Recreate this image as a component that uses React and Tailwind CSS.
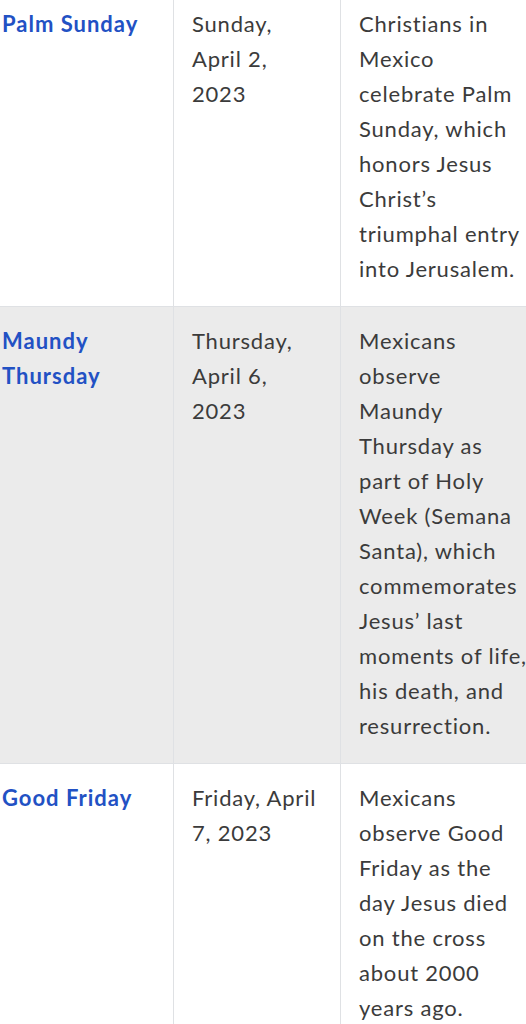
import React from 'react';

const holidays = [
  {
    name: ['Palm Sunday'],
    date: ['Sunday,', 'April 2,', '2023'],
    desc: [
      'Christians in',
      'Mexico',
      'celebrate Palm',
      'Sunday, which',
      'honors Jesus',
      'Christ’s',
      'triumphal entry',
      'into Jerusalem.',
    ],
  },
  {
    name: ['Maundy', 'Thursday'],
    date: ['Thursday,', 'April 6,', '2023'],
    desc: [
      'Mexicans',
      'observe',
      'Maundy',
      'Thursday as',
      'part of Holy',
      'Week (Semana',
      'Santa), which',
      'commemorates',
      'Jesus’ last',
      'moments of life,',
      'his death, and',
      'resurrection.',
    ],
  },
  {
    name: ['Good Friday'],
    date: ['Friday, April', '7, 2023'],
    desc: [
      'Mexicans',
      'observe Good',
      'Friday as the',
      'day Jesus died',
      'on the cross',
      'about 2000',
      'years ago.',
    ],
  },
];

const Lines = ({ lines }) =>
  lines.map((line, i) => (
    <span key={i} className="block whitespace-nowrap">
      {line}
    </span>
  ));

const App = () => {
  return (
    <div
      className="w-[526px] h-[1024px] overflow-hidden bg-white"
      style={{ fontFamily: 'Lato, "Noto Sans", sans-serif' }}
    >
      <table className="-ml-[17px] -mt-[11px] table-fixed border-collapse w-[569px] text-[22px] leading-[35px] tracking-[0.8px] text-[#3b3b3b]">
        <tbody>
          {holidays.map((h, idx) => (
            <tr key={idx} className={idx % 2 === 1 ? 'bg-[#ebebeb]' : 'bg-white'}>
              <td className="w-[190px] align-top border border-[#dfe1e4] px-[18px] pt-[16px] pb-[20px] font-bold tracking-[1px] text-[#2251c4]">
                <Lines lines={h.name} />
              </td>
              <td className="w-[167px] align-top border border-[#dfe1e4] px-[18px] pt-[16px] pb-[20px]">
                <Lines lines={h.date} />
              </td>
              <td className="w-[212px] align-top border border-[#dfe1e4] px-[18px] pt-[16px] pb-[20px]">
                <Lines lines={h.desc} />
              </td>
            </tr>
          ))}
        </tbody>
      </table>
    </div>
  );
};

export default App;
